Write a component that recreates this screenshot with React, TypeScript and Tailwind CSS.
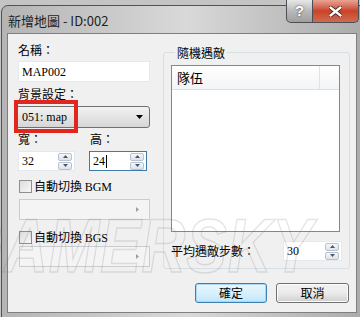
import React from 'react';

const cjk = "font-['Noto_Sans_CJK_TC','Noto_Sans',sans-serif]";
const serif = "font-['Liberation_Serif','Noto_Sans_CJK_TC',serif]";

const Spin: React.FC = () => (
  <div className="flex flex-col gap-[1px] w-[14px] mr-[2px]">
    <div className="h-[8px] border border-[#b7c3d1] rounded-[2px] bg-gradient-to-b from-[#f6f8fa] to-[#dde3ea] flex items-center justify-center">
      <svg width="5" height="3" viewBox="0 0 5 3"><path d="M0 3 L2.5 0 L5 3 Z" fill="#4d5663" /></svg>
    </div>
    <div className="h-[8px] border border-[#b7c3d1] rounded-[2px] bg-gradient-to-b from-[#f6f8fa] to-[#dde3ea] flex items-center justify-center">
      <svg width="5" height="3" viewBox="0 0 5 3"><path d="M0 0 L2.5 3 L5 0 Z" fill="#4d5663" /></svg>
    </div>
  </div>
);

const NumBox: React.FC<{ value: string; focused?: boolean; w: string; caret?: boolean }> = ({ value, focused, w, caret }) => (
  <div className={`${w} h-[20px] bg-white border flex items-center justify-between ${focused ? 'border-[#3d7bad]' : 'border-[#e3e9ef]'}`}>
    <span className={`${serif} text-[12px] pl-[3px] text-black leading-none flex items-center`}>
      {value}
      {caret && <span className="inline-block w-[1px] h-[13px] bg-black ml-[1px]" />}
    </span>
    <Spin />
  </div>
);

const Check: React.FC<{ label: string }> = ({ label }) => (
  <div className="flex items-center gap-[2px] h-[15px] ml-[4px]">
    <div className="w-[13px] h-[13px] border border-[#8e8f8f] bg-gradient-to-br from-[#dcdcdc] to-[#f8f8f8]" />
    <span className={`${cjk} text-[12px] leading-[15px] text-black`}>
      自動切換 <span className={serif}>{label}</span>
    </span>
  </div>
);

const DisabledCombo: React.FC = () => (
  <div className="ml-[4px] w-[131px] h-[21px] border border-[#c9cdd1] bg-[#f4f4f4] flex items-center justify-end pr-[10px]">
    <svg width="3" height="5" viewBox="0 0 3 5"><path d="M0 0 L3 2.5 L0 5 Z" fill="#a0a0a0" /></svg>
  </div>
);

const Button: React.FC<{ label: string; def?: boolean; w: string }> = ({ label, def, w }) => (
  <div
    className={`${w} h-[20px] rounded-[3px] border flex items-center justify-center ${cjk} text-[12px] text-black ${
      def
        ? 'border-[#3c7fb1] bg-gradient-to-b from-[#eaf6fd] via-[#d9f0fc] to-[#bee6fd] shadow-[inset_0_0_0_1px_#a7d9f5]'
        : 'border-[#707070] bg-gradient-to-b from-[#f2f2f2] via-[#ebebeb] to-[#cfcfcf] shadow-[inset_0_0_0_1px_#fcfcfc]'
    }`}
  >
    {label}
  </div>
);

export default function App() {
  return (
    <div className="w-[360px] h-[317px] overflow-hidden relative bg-[#c4c4c4]">
      {/* window */}
      <div className="mt-[5px] ml-[1px] w-[370px] h-[320px] rounded-t-[7px] border border-[#4f5358] bg-gradient-to-r from-[#b4b4b4] via-[#d9d9d9] to-[#a9a9a9] flex flex-col">
        <div className="h-[27px] flex items-center pl-[6px] pt-[2px]">
          <span className={`${cjk} text-[13px] text-[#1e1e1e] leading-none`}>新增地圖 - ID:002</span>
        </div>
        <div className="ml-[5px] w-[350px] h-[280px] border border-[#7c7f84] bg-[#f0f0f0] flex flex-col">
          <div className="flex pt-[8px]">
            {/* left column */}
            <div className="w-[135px] ml-[7px] flex flex-col">
              <span className={`${cjk} text-[12px] leading-[15px] ml-[3px] text-black`}>名稱：</span>
              <div className="mt-[4px] ml-[3px] w-[132px] h-[21px] bg-white border border-[#e3e9ef] flex items-center pl-[3px]">
                <span className={`${serif} text-[12px] text-black`}>MAP002</span>
              </div>
              <span className={`${cjk} text-[12px] leading-[15px] ml-[3px] mt-[4px] text-black`}>背景設定：</span>
              <div className="mt-[5px] w-[135px] h-[22px] rounded-[3px] border border-[#707070] bg-gradient-to-b from-[#f2f2f2] to-[#d6d6d6] flex items-center justify-between pl-[6px] pr-[6px]">
                <span className={`${serif} text-[12px] text-black`}>051: map</span>
                <svg width="7" height="4" viewBox="0 0 7 4"><path d="M0 0 L7 0 L3.5 4 Z" fill="#000" /></svg>
              </div>
              <div className="mt-[3px] flex">
                <span className={`${cjk} text-[12px] leading-[15px] ml-[3px] w-[72px] text-black`}>寬：</span>
                <span className={`${cjk} text-[12px] leading-[15px] text-black`}>高：</span>
              </div>
              <div className="mt-[5px] ml-[3px] flex gap-[14px]">
                <NumBox value="32" w="w-[57px]" />
                <NumBox value="24" w="w-[58px]" focused caret />
              </div>
              <div className="mt-[8px]"><Check label="BGM" /></div>
              <div className="mt-[5px]"><DisabledCombo /></div>
              <div className="mt-[10px]"><Check label="BGS" /></div>
              <div className="mt-[1px]"><DisabledCombo /></div>
            </div>

            {/* right group box */}
            <fieldset className="ml-[13px] mt-[3px] w-[187px] h-[224px] border border-[#d5dfe5] rounded-[3px] px-[7px] pb-[5px] flex flex-col">
              <legend className={`${cjk} text-[12px] leading-[15px] ml-[4px] px-[2px] text-black`}>隨機遇敵</legend>
              <div className="mt-[5px] w-[169px] h-[167px] border border-[#828790] bg-white flex flex-col">
                <div className="h-[24px] flex border-b border-[#dcdfe3] bg-gradient-to-b from-[#ffffff] to-[#f3f4f6]">
                  <div className={`w-[148px] border-r border-[#dfe2e6] flex items-center pl-[5px] ${cjk} text-[13px] text-black`}>隊伍</div>
                </div>
              </div>
              <div className="mt-[9px] flex items-center justify-between">
                <span className={`${cjk} text-[12px] text-black`}>平均遇敵步數：</span>
                <NumBox value="30" w="w-[59px]" />
              </div>
            </fieldset>
          </div>
          <div className="mt-[14px] flex justify-end gap-[9px] pr-[7px]">
            <Button label="確定" def w="w-[72px]" />
            <Button label="取消" w="w-[73px]" />
          </div>
        </div>
      </div>

      {/* caption buttons */}
      <div className="absolute top-0 left-[286px] flex">
        <div className="w-[27px] h-[23px] rounded-bl-[5px] border border-[#4c4f54] border-t-0 bg-gradient-to-b from-[#e8e8e8] via-[#b9b9b9] to-[#9f9f9f] flex items-center justify-center">
          <span className="font-['Liberation_Sans',sans-serif] font-bold text-[15px] text-white [text-shadow:0_0_2px_#333]">?</span>
        </div>
        <div className="w-[46px] h-[23px] rounded-br-[5px] border border-[#4c4f54] border-t-0 border-l-0 bg-gradient-to-b from-[#e8a493] via-[#c7432a] to-[#d06a4f] flex items-center justify-center">
          <svg width="13" height="11" viewBox="0 0 13 11">
            <path d="M1.5 1.5 L11.5 9.5 M11.5 1.5 L1.5 9.5" stroke="#3a1a14" strokeWidth="4" strokeLinecap="round" />
            <path d="M1.5 1.5 L11.5 9.5 M11.5 1.5 L1.5 9.5" stroke="#fff" strokeWidth="2.4" strokeLinecap="round" />
          </svg>
        </div>
      </div>

      {/* red highlight */}
      <div className="absolute left-[14px] top-[100px] w-[64px] h-[33px] border-[4px] border-[#e1251f]" />

      {/* watermark */}
      <div className="absolute left-[-44px] top-[208px] origin-left scale-x-[0.8] pointer-events-none font-['Liberation_Sans',sans-serif] font-bold italic text-[76px] leading-none tracking-[1px] text-transparent [-webkit-text-stroke:1.5px_rgba(120,120,120,0.2)]">
        GAMERSKY
      </div>
    </div>
  );
}
